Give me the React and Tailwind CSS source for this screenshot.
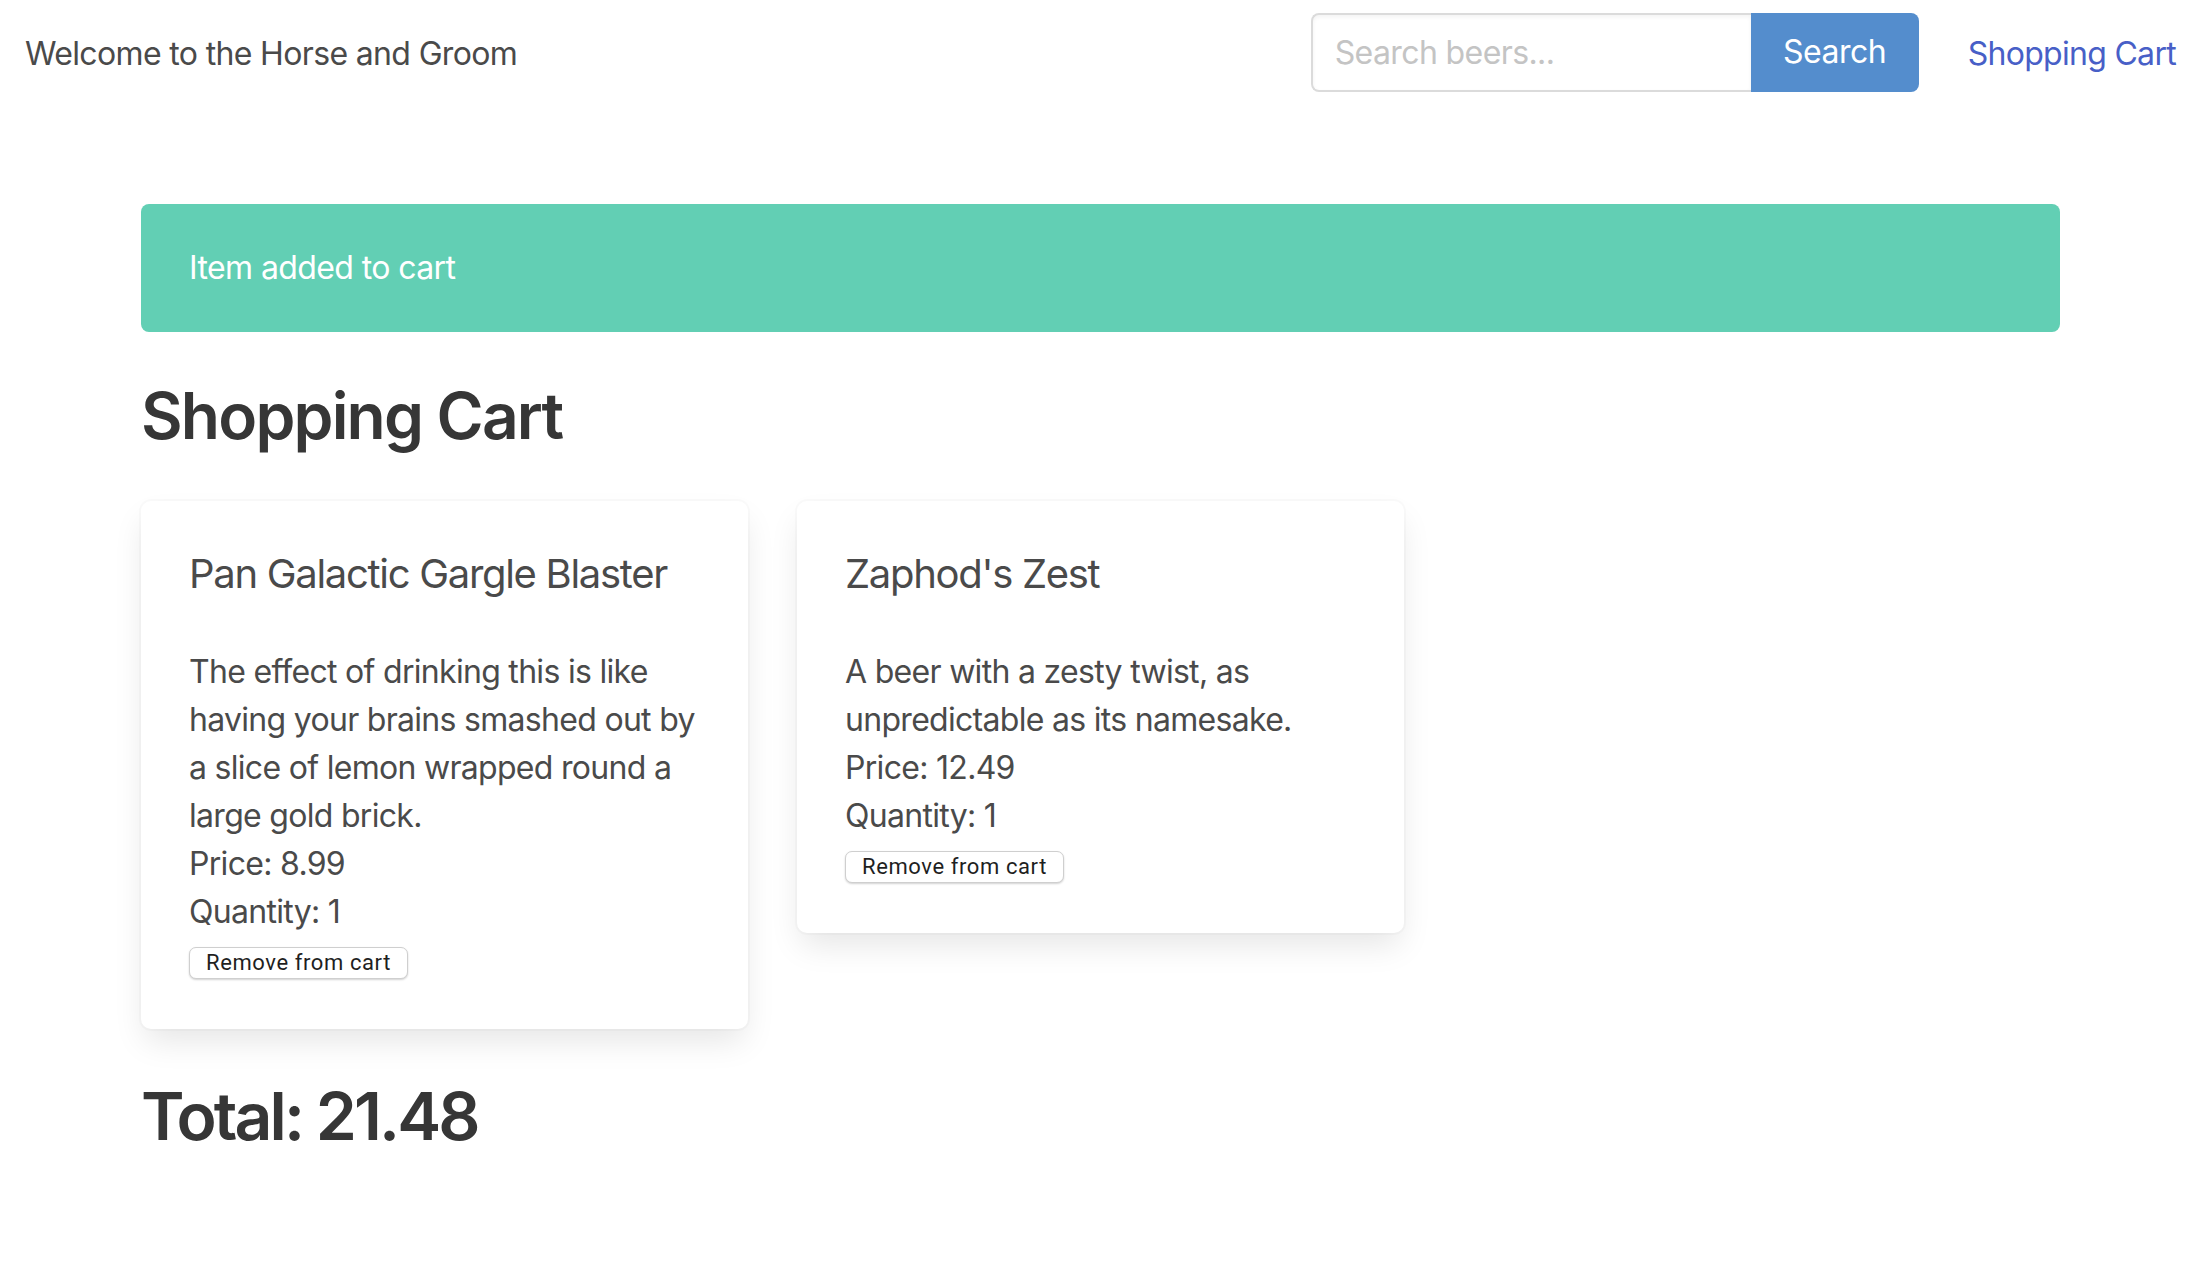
const items = [
  {
    id: 1,
    name: 'Pan Galactic Gargle Blaster',
    lines: [
      'The effect of drinking this is like',
      'having your brains smashed out by',
      'a slice of lemon wrapped round a',
      'large gold brick.',
    ],
    price: 8.99,
    quantity: 1,
  },
  {
    id: 2,
    name: "Zaphod's Zest",
    lines: ['A beer with a zesty twist, as', 'unpredictable as its namesake.'],
    price: 12.49,
    quantity: 1,
  },
];

const CartCard = ({ item }) => (
  <div className="w-[607px] bg-white rounded-[10px] px-[48px] pt-[48px] pb-[50px] shadow-[0_16px_32px_-4px_rgba(10,10,10,0.1),0_0_0_2px_rgba(10,10,10,0.02)]">
    <p className="text-[40px] leading-[50px] tracking-[-1.3px] text-[#4a4a4a] mb-[49px] whitespace-nowrap">{item.name}</p>
    <div className="text-[32px] leading-[48px] tracking-[-0.7px] text-[#4a4a4a]">
      {item.lines.map((line) => (
        <p key={line} className="whitespace-nowrap">{line}</p>
      ))}
      <p>Price: {item.price}</p>
      <p>Quantity: {item.quantity}</p>
    </div>
    <button className="mt-[11px] h-[32px] px-[16px] bg-white border border-[#cfcfcf] rounded-[7px] shadow-[0_1px_2px_rgba(0,0,0,0.18)] text-[22px] leading-none text-[#1f1f1f] font-['Roboto',sans-serif] tracking-[0.6px]">
      Remove from cart
    </button>
  </div>
);

export default function App() {
  const total = items.reduce((sum, i) => sum + i.price * i.quantity, 0);

  return (
    <div className="min-h-[1268px] bg-white font-['Inter',sans-serif] text-[#4a4a4a]">
      <nav className="h-[104px] flex items-center justify-between">
        <div className="pl-[25px] pt-[4px] text-[32px] tracking-[-0.65px] text-[#4a4a4a]">Welcome to the Horse and Groom</div>
        <div className="flex items-center">
          <form className="flex" onSubmit={(e) => e.preventDefault()}>
            <input
              type="text"
              placeholder="Search beers..."
              className="w-[440px] h-[79px] border-2 border-r-0 border-[#dbdbdb] rounded-l-[8px] px-[22px] text-[32px] tracking-[-0.6px] text-[#363636] placeholder:text-[#c4c4c4] shadow-[inset_0_2px_4px_rgba(10,10,10,0.05)] outline-none"
            />
            <button className="w-[168px] h-[79px] bg-[#548dcd] text-white text-[32px] tracking-[-0.5px] rounded-r-[8px]">
              Search
            </button>
          </form>
          <a href="#" className="ml-[49px] pr-[20px] pt-[4px] text-[32px] tracking-[-0.7px] text-[#485fc7]">
            Shopping Cart
          </a>
        </div>
      </nav>

      <section className="pl-[141px] pr-[136px] pt-[100px]">
        <div className="bg-[#62cfb4] rounded-[8px] pl-[48px] pr-[80px] py-[40px] text-white text-[32px] leading-[48px] tracking-[-0.6px] mb-[48px]">
          Item added to cart
        </div>

        <h1 className="text-[64px] leading-[72px] font-semibold text-[#363636] mb-[49px] tracking-[-1.8px]">
          Shopping Cart
        </h1>

        <div className="flex items-start gap-[49px]">
          {items.map((item) => (
            <CartCard key={item.id} item={item} />
          ))}
        </div>

        <h2 className="mt-[47px] text-[66px] leading-[80px] font-semibold text-[#363636] tracking-[-2.9px]">
          Total: {total.toFixed(2)}
        </h2>
      </section>
    </div>
  );
}
